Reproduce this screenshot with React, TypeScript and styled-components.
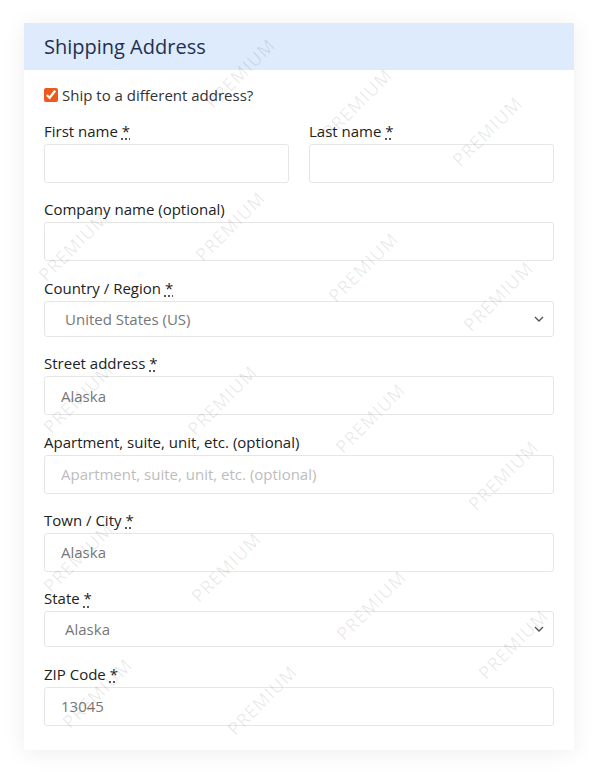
import React from "react";
import styled, { createGlobalStyle } from "styled-components";

const GlobalStyle = createGlobalStyle`
  * { box-sizing: border-box; }
  body {
    margin: 0;
    background: #ffffff;
    font-family: "Open Sans", "Noto Sans", sans-serif;
  }
`;

// watermark centres, relative to the card
const marks: [number, number][] = [
  [216, 50], [333, 80], [463, 108],
  [49, 223], [206, 203], [339, 244], [474, 273],
  [54, 375], [198, 377], [346, 395], [479, 452],
  [54, 534], [202, 544], [347, 582], [489, 621],
  [73, 670], [238, 677],
];

const Page = styled.div`
  padding: 23px 23px 22px 24px;
`;

const Card = styled.div`
  position: relative;
  overflow: hidden;
  background: #fff;
  box-shadow: 0 2px 22px rgba(0, 0, 0, 0.07);
`;

const Header = styled.h3`
  margin: 0;
  height: 47px;
  display: flex;
  align-items: center;
  padding: 0 20px;
  background: #ddebfc;
  color: #1f3150;
  font-size: 20px;
  font-weight: 500;
`;

const Body = styled.div`
  padding: 15px 20px 24px;
`;

const CheckRow = styled.label`
  display: flex;
  align-items: center;
  gap: 4px;
  height: 20px;
  margin-bottom: 15px;
  font-size: 15px;
  color: #333;
`;

const Check = styled.input`
  width: 14px;
  height: 14px;
  margin: 0;
  accent-color: #ea5a21;
`;

const Row = styled.div`
  display: grid;
  grid-template-columns: 1fr 1fr;
  gap: 20px;
`;

const Field = styled.div`
  margin-bottom: 15.4px;
  &:last-child { margin-bottom: 0; }
`;

const Label = styled.label`
  display: block;
  font-size: 15px;
  line-height: 22px;
  margin-bottom: 2px;
  color: #222;
  abbr {
    text-decoration: underline dotted;
    text-underline-offset: 2px;
    border: none;
  }
`;

const TextInput = styled.input`
  display: block;
  width: 100%;
  height: 39px;
  padding: 0 16px;
  border: 1px solid #e6e6e6;
  border-radius: 3px;
  font: inherit;
  font-size: 15px;
  color: #777;
  background: #fff;
  outline: none;
  &::placeholder { color: #bdbdbd; }
`;

const SelectWrap = styled.div`
  position: relative;
  svg {
    position: absolute;
    right: 10px;
    top: 50%;
    transform: translateY(-50%);
    pointer-events: none;
  }
`;

const Select = styled.select`
  display: block;
  width: 100%;
  height: 36px;
  padding: 0 20px;
  border: 1px solid #e6e6e6;
  border-radius: 3px;
  font: inherit;
  font-size: 15px;
  color: #777;
  background: #fff;
  appearance: none;
  outline: none;
`;

const Watermarks = styled.div`
  position: absolute;
  inset: 0;
  pointer-events: none;
`;

const Mark = styled.span.attrs<{ $x: number; $y: number }>((p) => ({
  style: { left: p.$x, top: p.$y },
}))<{ $x: number; $y: number }>`
  position: absolute;
  transform: translate(-50%, -50%) rotate(-45deg);
  font-size: 18px;
  letter-spacing: 1px;
  color: rgba(0, 0, 0, 0.09);
  white-space: nowrap;
`;

const Req = () => (
  <>
    {" "}
    <abbr title="required">*</abbr>
  </>
);

const Chevron = () => (
  <svg width="10" height="6" viewBox="0 0 10 6">
    <path d="M1 1l4 4 4-4" fill="none" stroke="#555" strokeWidth="1.4" />
  </svg>
);

const InputField = ({
  label,
  required,
  value,
  placeholder,
}: {
  label: string;
  required?: boolean;
  value?: string;
  placeholder?: string;
}) => (
  <Field>
    <Label>
      {label}
      {required && <Req />}
    </Label>
    <TextInput defaultValue={value} placeholder={placeholder} />
  </Field>
);

const SelectField = ({ label, value }: { label: string; value: string }) => (
  <Field>
    <Label>
      {label}
      <Req />
    </Label>
    <SelectWrap>
      <Select defaultValue={value}>
        <option>{value}</option>
      </Select>
      <Chevron />
    </SelectWrap>
  </Field>
);

export default function App() {
  return (
    <Page>
      <GlobalStyle />
      <Card>
        <Header>Shipping Address</Header>
        <Body>
          <CheckRow>
            <Check type="checkbox" defaultChecked />
            Ship to a different address?
          </CheckRow>
          <Row>
            <InputField label="First name" required />
            <InputField label="Last name" required />
          </Row>
          <InputField label="Company name (optional)" />
          <SelectField label="Country / Region" value="United States (US)" />
          <InputField label="Street address" required value="Alaska" />
          <InputField
            label="Apartment, suite, unit, etc. (optional)"
            placeholder="Apartment, suite, unit, etc. (optional)"
          />
          <InputField label="Town / City" required value="Alaska" />
          <SelectField label="State" value="Alaska" />
          <InputField label="ZIP Code" required value="13045" />
        </Body>
        <Watermarks>
          {marks.map(([x, y], i) => (
            <Mark key={i} $x={x} $y={y}>
              PREMIUM
            </Mark>
          ))}
        </Watermarks>
      </Card>
    </Page>
  );
}
